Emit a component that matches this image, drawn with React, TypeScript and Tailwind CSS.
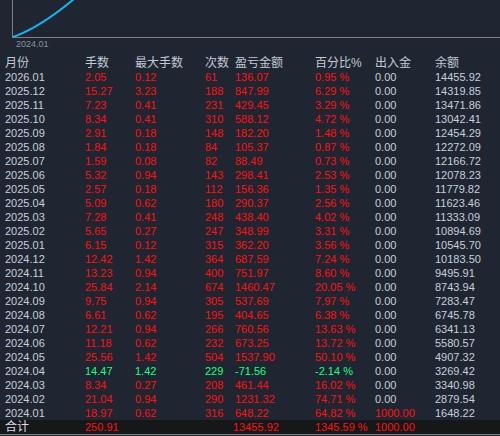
import React from "react";

type Row = { m: string; v: string[]; g?: boolean; dep?: boolean };

const rows: Row[] = [
  { m: "2026.01", v: ["2.05", "0.12", "61", "136.07", "0.95 %", "0.00", "14455.92"] },
  { m: "2025.12", v: ["15.27", "3.23", "188", "847.99", "6.29 %", "0.00", "14319.85"] },
  { m: "2025.11", v: ["7.23", "0.41", "231", "429.45", "3.29 %", "0.00", "13471.86"] },
  { m: "2025.10", v: ["8.34", "0.41", "310", "588.12", "4.72 %", "0.00", "13042.41"] },
  { m: "2025.09", v: ["2.91", "0.18", "148", "182.20", "1.48 %", "0.00", "12454.29"] },
  { m: "2025.08", v: ["1.84", "0.18", "84", "105.37", "0.87 %", "0.00", "12272.09"] },
  { m: "2025.07", v: ["1.59", "0.08", "82", "88.49", "0.73 %", "0.00", "12166.72"] },
  { m: "2025.06", v: ["5.32", "0.94", "143", "298.41", "2.53 %", "0.00", "12078.23"] },
  { m: "2025.05", v: ["2.57", "0.18", "112", "156.36", "1.35 %", "0.00", "11779.82"] },
  { m: "2025.04", v: ["5.09", "0.62", "180", "290.37", "2.56 %", "0.00", "11623.46"] },
  { m: "2025.03", v: ["7.28", "0.41", "248", "438.40", "4.02 %", "0.00", "11333.09"] },
  { m: "2025.02", v: ["5.65", "0.27", "247", "348.99", "3.31 %", "0.00", "10894.69"] },
  { m: "2025.01", v: ["6.15", "0.12", "315", "362.20", "3.56 %", "0.00", "10545.70"] },
  { m: "2024.12", v: ["12.42", "1.42", "364", "687.59", "7.24 %", "0.00", "10183.50"] },
  { m: "2024.11", v: ["13.23", "0.94", "400", "751.97", "8.60 %", "0.00", "9495.91"] },
  { m: "2024.10", v: ["25.84", "2.14", "674", "1460.47", "20.05 %", "0.00", "8743.94"] },
  { m: "2024.09", v: ["9.75", "0.94", "305", "537.69", "7.97 %", "0.00", "7283.47"] },
  { m: "2024.08", v: ["6.61", "0.62", "195", "404.65", "6.38 %", "0.00", "6745.78"] },
  { m: "2024.07", v: ["12.21", "0.94", "266", "760.56", "13.63 %", "0.00", "6341.13"] },
  { m: "2024.06", v: ["11.18", "0.62", "232", "673.25", "13.72 %", "0.00", "5580.57"] },
  { m: "2024.05", v: ["25.56", "1.42", "504", "1537.90", "50.10 %", "0.00", "4907.32"] },
  { m: "2024.04", v: ["14.47", "1.42", "229", "-71.56", "-2.14 %", "0.00", "3269.42"], g: true },
  { m: "2024.03", v: ["8.34", "0.27", "208", "461.44", "16.02 %", "0.00", "3340.98"] },
  { m: "2024.02", v: ["21.04", "0.94", "290", "1231.32", "74.71 %", "0.00", "2879.54"] },
  { m: "2024.01", v: ["18.97", "0.62", "316", "648.22", "64.82 %", "1000.00", "1648.22"], dep: true },
];

const grid =
  "grid grid-cols-[80px_50px_70px_30px_80px_60px_60px_1fr] pl-[5px] h-[14px] items-center whitespace-nowrap";

export default function App() {
  return (
    <div
      className="w-[500px] h-[436px] bg-[#1f2531] overflow-hidden text-[11px] leading-[14px]"
      style={{ fontFamily: '"Liberation Sans", "Noto Sans CJK SC", sans-serif' }}
    >
      <div className="relative h-[56px]">
        <svg width="500" height="56" className="block">
          <line x1="12.5" y1="0" x2="12.5" y2="37.5" stroke="#7d7f86" strokeWidth="1" />
          <line x1="12" y1="37.5" x2="500" y2="37.5" stroke="#7d7f86" strokeWidth="1" />
          <path d="M13 37 C 30 31, 50 19, 74 -1" stroke="#14b4f5" strokeWidth="2" fill="none" />
        </svg>
        <span className="absolute left-[16px] top-[39px] text-[9px] leading-[11px] text-[#8a939f]">2024.01</span>
      </div>
      <div className={grid + " text-[12px] text-[#c3cad6]"}>
        <span>月份</span>
        <span>手数</span>
        <span>最大手数</span>
        <span>次数</span>
        <span>盈亏金额</span>
        <span>百分比%</span>
        <span>出入金</span>
        <span>余额</span>
      </div>
      {rows.map((r) => {
        const c = r.g ? "text-[#1aff80]" : "text-[#ff1010]";
        return (
          <div key={r.m} className={grid}>
            <span className="text-[#c8d0dc]">{r.m}</span>
            <span className={c}>{r.v[0]}</span>
            <span className={c}>{r.v[1]}</span>
            <span className={c}>{r.v[2]}</span>
            <span className={c}>{r.v[3]}</span>
            <span className={c}>{r.v[4]}</span>
            <span className={r.dep ? "text-[#ff1010]" : "text-[#c8d0dc]"}>{r.v[5]}</span>
            <span className="text-[#c8d0dc]">{r.v[6]}</span>
          </div>
        );
      })}
      <div className={grid + " bg-[#161719]"}>
        <span className="text-[12px] text-[#d8dde6]">合计</span>
        <span className="text-[#ff1010]">250.91</span>
        <span></span>
        <span></span>
        <span className="text-[#ff1010] -ml-[2px]">13455.92</span>
        <span className="text-[#ff1010]">1345.59 %</span>
        <span className="text-[#ff1010]">1000.00</span>
        <span></span>
      </div>
      <div className="h-[1px] bg-[#7d818c]" />
    </div>
  );
}
